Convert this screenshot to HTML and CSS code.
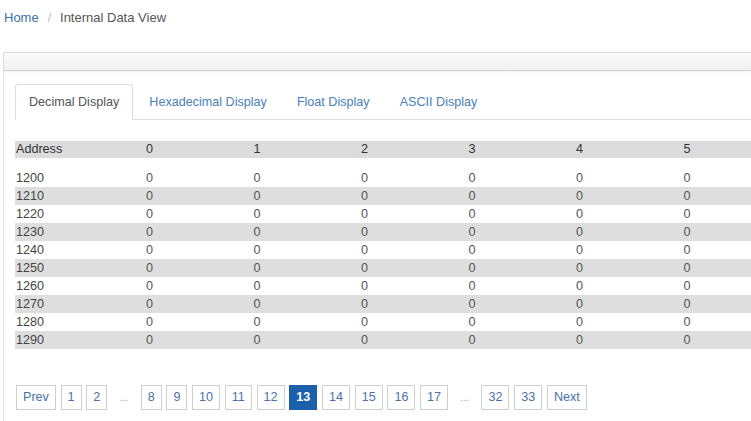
FILE: index.html
```html
<!DOCTYPE html>
<html>
<head>
<meta charset="utf-8">
<link rel="stylesheet" href="styles.css">
</head>
<body>
<div class="breadcrumb"><a class="crumb-link">Home</a><span class="sep">/</span><span class="crumb-current">Internal Data View</span></div>
<div class="panel">
  <div class="panel-head"></div>
  <div class="panel-body">
    <ul class="tabs">
      <li class="tab active">Decimal Display</li>
      <li class="tab">Hexadecimal Display</li>
      <li class="tab">Float Display</li>
      <li class="tab">ASCII Display</li>
    </ul>
    <table class="grid">
      <colgroup><col class="c-addr"><col class="c-val"><col class="c-val"><col class="c-val"><col class="c-val"><col class="c-val"><col class="c-last"></colgroup>
      <thead>
        <tr class="head"><th>Address</th><th>0</th><th>1</th><th>2</th><th>3</th><th>4</th><th>5</th></tr>
      </thead>
      <tbody>
        <tr class="spacer"><td colspan="7"></td></tr>
        <tr><td class="addr">1200</td><td>0</td><td>0</td><td>0</td><td>0</td><td>0</td><td>0</td></tr>
        <tr class="odd"><td class="addr">1210</td><td>0</td><td>0</td><td>0</td><td>0</td><td>0</td><td>0</td></tr>
        <tr><td class="addr">1220</td><td>0</td><td>0</td><td>0</td><td>0</td><td>0</td><td>0</td></tr>
        <tr class="odd"><td class="addr">1230</td><td>0</td><td>0</td><td>0</td><td>0</td><td>0</td><td>0</td></tr>
        <tr><td class="addr">1240</td><td>0</td><td>0</td><td>0</td><td>0</td><td>0</td><td>0</td></tr>
        <tr class="odd"><td class="addr">1250</td><td>0</td><td>0</td><td>0</td><td>0</td><td>0</td><td>0</td></tr>
        <tr><td class="addr">1260</td><td>0</td><td>0</td><td>0</td><td>0</td><td>0</td><td>0</td></tr>
        <tr class="odd"><td class="addr">1270</td><td>0</td><td>0</td><td>0</td><td>0</td><td>0</td><td>0</td></tr>
        <tr><td class="addr">1280</td><td>0</td><td>0</td><td>0</td><td>0</td><td>0</td><td>0</td></tr>
        <tr class="odd"><td class="addr">1290</td><td>0</td><td>0</td><td>0</td><td>0</td><td>0</td><td>0</td></tr>
      </tbody>
    </table>
    <div class="pager">
      <span class="pg">Prev</span>
      <span class="pg">1</span>
      <span class="pg">2</span>
      <span class="dots">...</span>
      <span class="pg">8</span>
      <span class="pg">9</span>
      <span class="pg">10</span>
      <span class="pg">11</span>
      <span class="pg">12</span>
      <span class="pg current">13</span>
      <span class="pg">14</span>
      <span class="pg">15</span>
      <span class="pg">16</span>
      <span class="pg">17</span>
      <span class="dots">...</span>
      <span class="pg">32</span>
      <span class="pg">33</span>
      <span class="pg">Next</span>
    </div>
  </div>
</div>
</body>
</html>
```

FILE: styles.css
```css
html, body {
  margin: 0;
  padding: 0;
  overflow: hidden;
  background: #ffffff;
}
body {
  font-family: "Liberation Sans", Arial, sans-serif;
  font-size: 12.6px;
  color: #333;
  width: 751px;
  height: 421px;
}
.breadcrumb {
  padding: 8px 0 0 4px;
  height: 20px;
  line-height: 20px;
  font-size: 13px;
}
.crumb-link {
  color: #3a70aa;
}
.sep {
  color: #bbb;
  margin: 0 9px 0 9px;
  font-size: 12px;
}
.crumb-current {
  color: #555;
}
.panel {
  margin: 24px 0 0 3px;
  border-left: 1px solid #e2e2e2;
  border-top: 1px solid #dcdcdc;
  height: 368px;
}
.panel-head {
  height: 17px;
  background: linear-gradient(#fcfcfc, #f1f1f1);
  border-bottom: 1px solid #d4d4d4;
  box-shadow: 0 1px 2px rgba(0,0,0,0.06);
}
.panel-body {
  padding: 13px 0 0 11px;
}
.tabs {
  list-style: none;
  margin: 0;
  padding: 0;
  display: flex;
  border-bottom: 1px solid #dedede;
  height: 35px;
}
.tab {
  padding: 0 13px;
  line-height: 34px;
  border: 1px solid transparent;
  border-bottom: none;
  margin-right: 2px;
  color: #4a80bb;
  white-space: nowrap;
}
.tab.active {
  color: #555;
  background: #fff;
  border-color: #dedede;
  border-radius: 3px 3px 0 0;
  height: 35px;
}
.grid {
  margin-top: 21px;
  border-collapse: collapse;
  table-layout: fixed;
  width: 736px;
}
.c-addr { width: 130px; }
.c-val { width: 107.5px; }
.c-last { width: 68.5px; }
.grid th, .grid td {
  padding: 0 1px;
  text-align: left;
  font-weight: normal;
  white-space: nowrap;
}
.grid .head th {
  background: #dcdcdc;
  height: 17px;
  line-height: 17px;
  color: #333;
}
.grid .spacer td {
  height: 11px;
  padding: 0;
}
.grid tbody td {
  height: 18px;
  line-height: 18px;
  color: #555;
}
.grid tbody td.addr {
  color: #444;
}
.grid tr.odd td {
  background: #dedede;
}
.pager {
  display: flex;
  gap: 4.7px;
  margin: 36px 0 0 1px;
  align-items: center;
}
.pg {
  border: 1px solid #cfcfcf;
  padding: 0 6px;
  height: 23px;
  line-height: 23px;
  color: #4a72a8;
  background: #fff;
}
.pg.current {
  background: #1c5fab;
  border-color: #1c5fab;
  color: #fff;
  font-weight: bold;
}
.dots {
  width: 24px;
  text-align: center;
  color: #999;
  font-size: 10px;
  line-height: 23px;
}
```
